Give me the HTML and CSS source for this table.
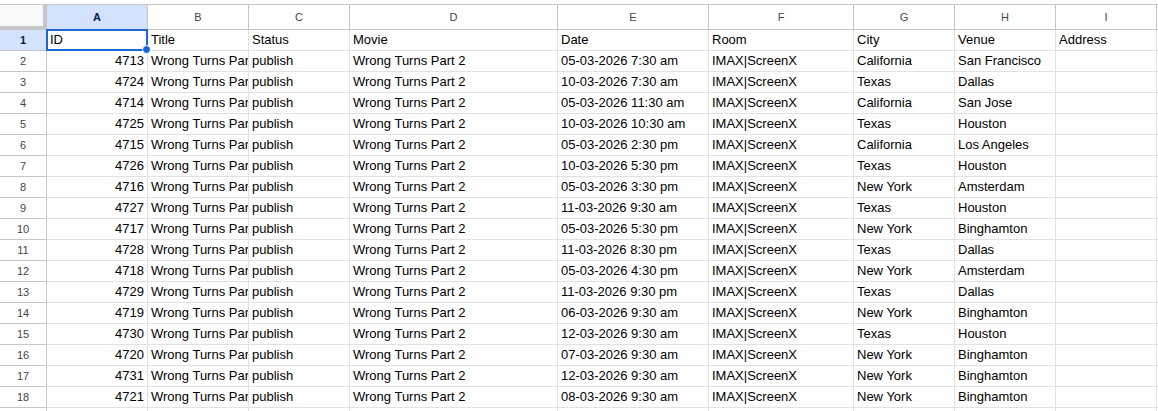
FILE: index.html
```html
<!DOCTYPE html>
<html>
<head>
<meta charset="utf-8">
<link rel="stylesheet" href="styles.css">
</head>
<body>
<div class="sheet">
  <div class="corner"></div>
  <div class="ch sel">A</div><div class="ch">B</div><div class="ch">C</div><div class="ch">D</div><div class="ch">E</div><div class="ch">F</div><div class="ch">G</div><div class="ch">H</div><div class="ch">I</div><div class="ch"></div>

  <div class="rh sel">1</div><div class="c active">ID</div><div class="c">Title</div><div class="c">Status</div><div class="c">Movie</div><div class="c">Date</div><div class="c">Room</div><div class="c">City</div><div class="c">Venue</div><div class="c">Address</div><div class="c"></div>

  <div class="rh">2</div><div class="c n">4713</div><div class="c">Wrong Turns Part 2</div><div class="c">publish</div><div class="c">Wrong Turns Part 2</div><div class="c">05-03-2026 7:30 am</div><div class="c">IMAX|ScreenX</div><div class="c">California</div><div class="c">San Francisco</div><div class="c"></div><div class="c"></div>
  <div class="rh">3</div><div class="c n">4724</div><div class="c">Wrong Turns Part 2</div><div class="c">publish</div><div class="c">Wrong Turns Part 2</div><div class="c">10-03-2026 7:30 am</div><div class="c">IMAX|ScreenX</div><div class="c">Texas</div><div class="c">Dallas</div><div class="c"></div><div class="c"></div>
  <div class="rh">4</div><div class="c n">4714</div><div class="c">Wrong Turns Part 2</div><div class="c">publish</div><div class="c">Wrong Turns Part 2</div><div class="c">05-03-2026 11:30 am</div><div class="c">IMAX|ScreenX</div><div class="c">California</div><div class="c">San Jose</div><div class="c"></div><div class="c"></div>
  <div class="rh">5</div><div class="c n">4725</div><div class="c">Wrong Turns Part 2</div><div class="c">publish</div><div class="c">Wrong Turns Part 2</div><div class="c">10-03-2026 10:30 am</div><div class="c">IMAX|ScreenX</div><div class="c">Texas</div><div class="c">Houston</div><div class="c"></div><div class="c"></div>
  <div class="rh">6</div><div class="c n">4715</div><div class="c">Wrong Turns Part 2</div><div class="c">publish</div><div class="c">Wrong Turns Part 2</div><div class="c">05-03-2026 2:30 pm</div><div class="c">IMAX|ScreenX</div><div class="c">California</div><div class="c">Los Angeles</div><div class="c"></div><div class="c"></div>
  <div class="rh">7</div><div class="c n">4726</div><div class="c">Wrong Turns Part 2</div><div class="c">publish</div><div class="c">Wrong Turns Part 2</div><div class="c">10-03-2026 5:30 pm</div><div class="c">IMAX|ScreenX</div><div class="c">Texas</div><div class="c">Houston</div><div class="c"></div><div class="c"></div>
  <div class="rh">8</div><div class="c n">4716</div><div class="c">Wrong Turns Part 2</div><div class="c">publish</div><div class="c">Wrong Turns Part 2</div><div class="c">05-03-2026 3:30 pm</div><div class="c">IMAX|ScreenX</div><div class="c">New York</div><div class="c">Amsterdam</div><div class="c"></div><div class="c"></div>
  <div class="rh">9</div><div class="c n">4727</div><div class="c">Wrong Turns Part 2</div><div class="c">publish</div><div class="c">Wrong Turns Part 2</div><div class="c">11-03-2026 9:30 am</div><div class="c">IMAX|ScreenX</div><div class="c">Texas</div><div class="c">Houston</div><div class="c"></div><div class="c"></div>
  <div class="rh">10</div><div class="c n">4717</div><div class="c">Wrong Turns Part 2</div><div class="c">publish</div><div class="c">Wrong Turns Part 2</div><div class="c">05-03-2026 5:30 pm</div><div class="c">IMAX|ScreenX</div><div class="c">New York</div><div class="c">Binghamton</div><div class="c"></div><div class="c"></div>
  <div class="rh">11</div><div class="c n">4728</div><div class="c">Wrong Turns Part 2</div><div class="c">publish</div><div class="c">Wrong Turns Part 2</div><div class="c">11-03-2026 8:30 pm</div><div class="c">IMAX|ScreenX</div><div class="c">Texas</div><div class="c">Dallas</div><div class="c"></div><div class="c"></div>
  <div class="rh">12</div><div class="c n">4718</div><div class="c">Wrong Turns Part 2</div><div class="c">publish</div><div class="c">Wrong Turns Part 2</div><div class="c">05-03-2026 4:30 pm</div><div class="c">IMAX|ScreenX</div><div class="c">New York</div><div class="c">Amsterdam</div><div class="c"></div><div class="c"></div>
  <div class="rh">13</div><div class="c n">4729</div><div class="c">Wrong Turns Part 2</div><div class="c">publish</div><div class="c">Wrong Turns Part 2</div><div class="c">11-03-2026 9:30 pm</div><div class="c">IMAX|ScreenX</div><div class="c">Texas</div><div class="c">Dallas</div><div class="c"></div><div class="c"></div>
  <div class="rh">14</div><div class="c n">4719</div><div class="c">Wrong Turns Part 2</div><div class="c">publish</div><div class="c">Wrong Turns Part 2</div><div class="c">06-03-2026 9:30 am</div><div class="c">IMAX|ScreenX</div><div class="c">New York</div><div class="c">Binghamton</div><div class="c"></div><div class="c"></div>
  <div class="rh">15</div><div class="c n">4730</div><div class="c">Wrong Turns Part 2</div><div class="c">publish</div><div class="c">Wrong Turns Part 2</div><div class="c">12-03-2026 9:30 am</div><div class="c">IMAX|ScreenX</div><div class="c">Texas</div><div class="c">Houston</div><div class="c"></div><div class="c"></div>
  <div class="rh">16</div><div class="c n">4720</div><div class="c">Wrong Turns Part 2</div><div class="c">publish</div><div class="c">Wrong Turns Part 2</div><div class="c">07-03-2026 9:30 am</div><div class="c">IMAX|ScreenX</div><div class="c">New York</div><div class="c">Binghamton</div><div class="c"></div><div class="c"></div>
  <div class="rh">17</div><div class="c n">4731</div><div class="c">Wrong Turns Part 2</div><div class="c">publish</div><div class="c">Wrong Turns Part 2</div><div class="c">12-03-2026 9:30 am</div><div class="c">IMAX|ScreenX</div><div class="c">New York</div><div class="c">Binghamton</div><div class="c"></div><div class="c"></div>
  <div class="rh">18</div><div class="c n">4721</div><div class="c">Wrong Turns Part 2</div><div class="c">publish</div><div class="c">Wrong Turns Part 2</div><div class="c">08-03-2026 9:30 am</div><div class="c">IMAX|ScreenX</div><div class="c">New York</div><div class="c">Binghamton</div><div class="c"></div><div class="c"></div>
  <div class="rh">19</div><div class="c"></div><div class="c"></div><div class="c"></div><div class="c"></div><div class="c"></div><div class="c"></div><div class="c"></div><div class="c"></div><div class="c"></div><div class="c"></div>
</div>
</body>
</html>
```

FILE: styles.css
```css
html, body {
  margin: 0;
  padding: 0;
  background: #ffffff;
  overflow: hidden;
}
body {
  padding-top: 4px;
  font-family: "Liberation Sans", Arial, sans-serif;
}
.sheet {
  display: grid;
  grid-template-columns: 47px 101px 101px 101px 208px 151px 145px 101px 101px 101px 1fr;
  grid-template-rows: 25px;
  grid-auto-rows: 21px;
  border-top: 1px solid #c4c7c5;
}
.corner {
  background: #f8f9fa;
  border-right: 4px solid #c4c7c5;
  border-bottom: 4px solid #c4c7c5;
}
.ch {
  display: flex;
  align-items: center;
  justify-content: center;
  font-size: 11px;
  color: #444746;
  background: #ffffff;
  border-right: 1px solid #c4c7c5;
  border-bottom: 1px solid #c4c7c5;
  box-sizing: border-box;
  padding-bottom: 1px;
}
.rh {
  display: flex;
  align-items: center;
  justify-content: center;
  font-size: 11px;
  color: #444746;
  background: #ffffff;
  border-right: 1px solid #c4c7c5;
  border-bottom: 1px solid #c4c7c5;
  box-sizing: border-box;
}
.ch.sel, .rh.sel {
  background: #d3e3fd;
  color: #041e49;
  font-weight: bold;
}
.c {
  box-sizing: border-box;
  border-right: 1px solid #e2e2e2;
  border-bottom: 1px solid #e2e2e2;
  font-size: 13px;
  line-height: 20px;
  color: #000000;
  padding: 0 3px;
  white-space: nowrap;
  overflow: hidden;
}
.c.n {
  text-align: right;
}
.c.active {
  position: relative;
  overflow: visible;
  z-index: 2;
}
.c.active::before {
  content: "";
  position: absolute;
  left: -1px;
  top: -1px;
  right: -1px;
  bottom: -1px;
  border: 2px solid #1a66d6;
  pointer-events: none;
}
.c.active::after {
  content: "";
  position: absolute;
  right: -4px;
  bottom: -4px;
  width: 7px;
  height: 7px;
  border-radius: 50%;
  background: #1a66d6;
  border: 1px solid #ffffff;
}
```
